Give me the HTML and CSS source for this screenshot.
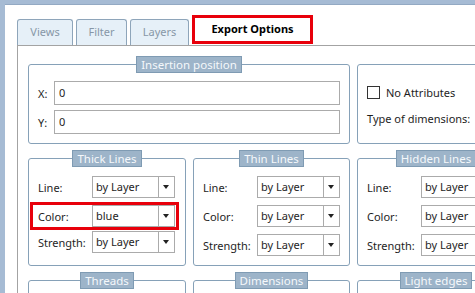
FILE: index.html
```html
<!DOCTYPE html>
<html lang="en">
<head>
    <meta charset="UTF-8">
    <title>Export Options</title>
    <link rel="stylesheet" href="styles.css">
</head>
<body>
    <div class="window">
        <div class="tabs">
            <div class="tab tab-views">Views</div>
            <div class="tab tab-filter">Filter</div>
            <div class="tab tab-layers">Layers</div>
            <div class="tab tab-export active">Export Options</div>
        </div>
        <div class="panel">
            <div class="groups">
                <fieldset class="group wide">
                    <legend>Insertion position</legend>
                    <div class="coord"><label>X:</label><div class="input">0</div></div>
                    <div class="coord"><label>Y:</label><div class="input">0</div></div>
                </fieldset>
                <fieldset class="group plain">
                    <div class="check"><span class="box"></span>No Attributes</div>
                    <div class="dim-type">Type of dimensions:</div>
                </fieldset>

                <fieldset class="group">
                    <legend>Thick Lines</legend>
                    <div class="row"><label>Line:</label><div class="select">by Layer<span class="arrow"></span></div></div>
                    <div class="row highlight"><label>Color:</label><div class="select">blue<span class="arrow"></span></div></div>
                    <div class="row"><label>Strength:</label><div class="select">by Layer<span class="arrow"></span></div></div>
                </fieldset>
                <fieldset class="group">
                    <legend>Thin Lines</legend>
                    <div class="row"><label>Line:</label><div class="select">by Layer<span class="arrow"></span></div></div>
                    <div class="row"><label>Color:</label><div class="select">by Layer<span class="arrow"></span></div></div>
                    <div class="row"><label>Strength:</label><div class="select">by Layer<span class="arrow"></span></div></div>
                </fieldset>
                <fieldset class="group">
                    <legend>Hidden Lines</legend>
                    <div class="row"><label>Line:</label><div class="select">by Layer<span class="arrow"></span></div></div>
                    <div class="row"><label>Color:</label><div class="select">by Layer<span class="arrow"></span></div></div>
                    <div class="row"><label>Strength:</label><div class="select">by Layer<span class="arrow"></span></div></div>
                </fieldset>

                <fieldset class="group">
                    <legend>Threads</legend>
                    <div class="row"><label>Line:</label><div class="select">by Layer<span class="arrow"></span></div></div>
                </fieldset>
                <fieldset class="group">
                    <legend>Dimensions</legend>
                    <div class="row"><label>Line:</label><div class="select">by Layer<span class="arrow"></span></div></div>
                </fieldset>
                <fieldset class="group">
                    <legend>Light edges</legend>
                    <div class="row"><label>Line:</label><div class="select">by Layer<span class="arrow"></span></div></div>
                </fieldset>
            </div>
        </div>
    </div>
</body>
</html>
```

FILE: styles.css
```css
* {
    margin: 0;
    padding: 0;
    box-sizing: border-box;
}

html, body {
    height: 100%;
    overflow: hidden;
}

body {
    font-family: 'Noto Sans', 'Open Sans', sans-serif;
    font-size: 11px;
    color: #1e1e1e;
    background: #a6bbd4;
    padding: 4px 0 0 5px;
}

.window {
    background: #fff;
    height: 100%;
    width: 600px;
    border-top: 1px solid #93a9c3;
    padding: 11px 0 0 12px;
}

/* Tabs */
.tabs {
    display: flex;
    align-items: flex-end;
    gap: 3px;
    height: 30px;
    border-bottom: 1px solid #a3a3a3;
}

.tab {
    height: 26px;
    line-height: 24px;
    text-align: center;
    color: #8797a7;
    background: #e6f0f8;
    border: 1px solid #8ea5ba;
    border-bottom: none;
    border-radius: 3px 3px 0 0;
}

.tab-views { width: 56px; }
.tab-filter { width: 51px; }
.tab-layers { width: 59px; }

.tab.active {
    width: 121px;
    height: 29px;
    line-height: 22px;
    margin-bottom: 1px;
    color: #000;
    font-weight: bold;
    background: #fff;
    border: 3px solid #e8000b;
    border-radius: 0;
    box-shadow: 0 1px 0 #fff;
}

/* Tab page */
.panel {
    border-left: 1px solid #a3a3a3;
    height: 100%;
    padding: 10px 0 0 10px;
}

.groups {
    display: grid;
    grid-template-columns: 158px 157px 158px;
    column-gap: 7px;
    row-gap: 6px;
}

.group {
    border: 1px solid #86a1b8;
    border-radius: 3px;
    padding: 9px 9px 9px 9px;
    min-width: 0;
}

.group legend {
    margin: 0 auto;
    height: 17px;
    line-height: 15px;
    padding: 0 4px;
    font-size: 11.5px;
    color: #f5f8fb;
    background: #9db4c9;
    border: 1px solid #7f9bb3;
}

.group.wide {
    grid-column: span 2;
    padding: 8px 9px 9px 9px;
}

.group.plain {
    margin-top: 8px;
    padding: 20px 9px 0 9px;
}

/* Insertion position */
.coord {
    display: flex;
    align-items: center;
    height: 24px;
}

.coord + .coord {
    margin-top: 5px;
}

.coord label {
    width: 16px;
}

.input {
    flex: 1;
    height: 24px;
    line-height: 22px;
    padding-left: 4px;
    border: 1px solid #ababab;
}

/* Right box */
.check {
    display: flex;
    align-items: center;
    gap: 6px;
    white-space: nowrap;
}

.box {
    width: 13px;
    height: 13px;
    border: 1px solid #333;
    background: #fff;
}

.dim-type {
    margin-top: 11px;
    white-space: nowrap;
}

/* Dropdown rows */
.row {
    display: flex;
    align-items: center;
    height: 22px;
}

.row + .row {
    margin-top: 7px;
}

.row label {
    width: 54px;
    flex-shrink: 0;
}

.select {
    position: relative;
    width: 83px;
    height: 22px;
    line-height: 20px;
    padding-left: 3px;
    border: 1px solid #ababab;
    white-space: nowrap;
}

.arrow {
    position: absolute;
    top: 0;
    right: 0;
    width: 16px;
    height: 20px;
    border-left: 1px solid #ababab;
}

.arrow:after {
    content: '';
    position: absolute;
    left: 4px;
    top: 8px;
    border-left: 3.5px solid transparent;
    border-right: 3.5px solid transparent;
    border-top: 4px solid #222;
}

.row.highlight {
    height: 28px;
    margin: 4px -3px -3px -8px;
    padding-left: 5px;
    border: 3px solid #e8000b;
}

.row.highlight + .row {
    margin-top: 4px;
}
```
